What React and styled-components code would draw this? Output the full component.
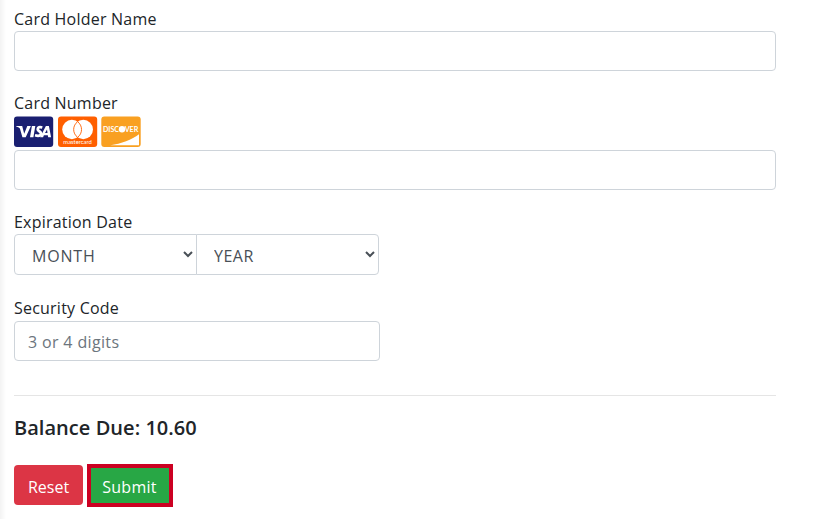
import styled, { createGlobalStyle, css } from 'styled-components';

function VisaIcon() {
  return (
    <svg width="40" height="31" viewBox="0 0 40 31">
      <rect x="0" y="0.5" width="39.2" height="30.5" rx="3" fill="#1a1f71" />
      <path d="M2.2 10h6l2 7.700 3.100-7.700h3.600L11.700 21.200H8.400L5.900 12.400Q4.600 11.300 2.200 10.600z" fill="#fff" />
      <path d="M17.900 10h3.400L19.400 21.200h-3.400z" fill="#fff" />
      <path d="M28.300 11.500Q24 10.300 23.700 13.200C23.700 15.400 27.400 15.200 27 17.900Q26.200 20.700 21 19.300" fill="none" stroke="#fff" strokeWidth="2.700" />
      <path fillRule="evenodd" d="M31.900 10h3L37.100 21.200h-2.900l-.4-2h-3.900L29.100 21.200h-3zM33 13.500l-2 3.600h2.500z" fill="#fff" />
    </svg>
  );
}

function MastercardIcon() {
  return (
    <svg width="40" height="31" viewBox="0 0 40 31">
      <rect x="0" y="0.5" width="39.2" height="30.5" rx="3" fill="#ff5f00" />
      <circle cx="13.900" cy="13.500" r="9.700" fill="#fff" />
      <circle cx="25.300" cy="13.500" r="9.700" fill="#fff" />
      <path d="M19.600 5.700a9.700 9.700 0 0 1 0 15.600a9.700 9.700 0 0 1 0-15.600z" fill="#fff" stroke="#ff5f00" strokeWidth="0.900" />
      <text x="19.600" y="28" textAnchor="middle" textLength="28.500" lengthAdjust="spacingAndGlyphs" fontFamily="Lato, sans-serif" fontSize="5.400" fill="#fff">mastercard</text>
    </svg>
  );
}

function DiscoverIcon() {
  return (
    <svg width="40" height="31" viewBox="0 0 40 31">
      <rect x="0.3" y="0.5" width="39.400" height="30.500" rx="3" fill="#f9a021" />
      <text x="2" y="15.900" textLength="16" lengthAdjust="spacingAndGlyphs" fontFamily="Lato, sans-serif" fontWeight="700" fontSize="8.200" fill="#fff">DISC</text>
      <circle cx="21" cy="13.200" r="3.200" fill="#fff" />
      <text x="23.700" y="15.900" textLength="13.600" lengthAdjust="spacingAndGlyphs" fontFamily="Lato, sans-serif" fontWeight="700" fontSize="8.200" fill="#fff">VER</text>
      <path d="M9.500 29.200C20 27.800 31 23.800 38 18.300v10.900z" fill="#fff" />
    </svg>
  );
}

function App() {
  return (
    <>
      <GlobalStyle />
      <Page>
        <Form onSubmit={e => e.preventDefault()}>
          <Group $gap={20}>
            <Label htmlFor="holder">Card Holder Name</Label>
            <Input id="holder" type="text" />
          </Group>
          <Group $gap={20}>
            <Label htmlFor="number">Card Number</Label>
            <Cards>
              <VisaIcon />
              <MastercardIcon />
              <DiscoverIcon />
            </Cards>
            <Input id="number" type="text" />
          </Group>
          <Group $gap={21}>
            <Label htmlFor="month">Expiration Date</Label>
            <SelectRow>
              <Select id="month" $first>
                <option>MONTH</option>
              </Select>
              <Select aria-label="year">
                <option>YEAR</option>
              </Select>
            </SelectRow>
          </Group>
          <Group $gap={34}>
            <Label htmlFor="code" $tall>Security Code</Label>
            <Input id="code" type="text" placeholder="3 or 4 digits" $short />
          </Group>
          <Divider />
          <Balance>Balance Due: 10.60</Balance>
          <Actions>
            <ResetButton type="reset">Reset</ResetButton>
            <SubmitButton type="submit">Submit</SubmitButton>
          </Actions>
        </Form>
      </Page>
    </>
  );
}

const GlobalStyle = createGlobalStyle`
  * {
    box-sizing: border-box;
  }
  body {
    margin: 0;
    background: #fff;
    color: #212529;
    font-family: "Open Sans", "Noto Sans", sans-serif;
    font-size: 16px;
    overflow: hidden;
  }
`;

const Page = styled.main`
  height: 519px;
  padding: 7px 42px 0 14px;
  background: linear-gradient(to right, #f3f3f3, #fff 6px);
`;

const Form = styled.form`
  display: flex;
  flex-direction: column;
`;

const Group = styled.div`
  display: flex;
  flex-direction: column;
  margin-bottom: ${props => props.$gap}px;
`;

const Label = styled.label`
  height: ${props => (props.$tall ? 25 : 24)}px;
  line-height: 24px;
  letter-spacing: 0.22px;
`;

const control = css`
  background: #fff;
  border: 1px solid #ced4da;
  font-family: inherit;
  font-size: 16px;
  letter-spacing: 0.35px;
  color: #495057;
  outline: none;
`;

const Input = styled.input`
  ${control}
  width: ${props => (props.$short ? '366px' : '100%')};
  height: 40px;
  padding: 2px 13px 0;
  border-radius: 4px;

  &::placeholder {
    color: #6c757d;
    opacity: 1;
  }
`;

const Cards = styled.div`
  display: flex;
  gap: 3.500px;
  height: 35px;
  padding-top: 1px;
`;

const SelectRow = styled.div`
  display: flex;
  width: 365px;
`;

const Select = styled.select`
  ${control}
  width: 183px;
  height: 41px;
  padding: 2px 2px 0 13px;
  letter-spacing: ${props => (props.$first ? 0.8 : 0.5)}px;
  border-radius: ${props => (props.$first ? '4px 0 0 4px' : '0 4px 4px 0')};

  & + & {
    margin-left: -1px;
  }
`;

const Divider = styled.hr`
  width: 100%;
  margin: 0;
  border: 0;
  border-top: 1px solid #e5e5e5;
`;

const Balance = styled.h5`
  margin: 19px 0 23px;
  font-size: 20px;
  font-weight: 600;
  letter-spacing: 0.04px;
  line-height: 26px;
`;

const Actions = styled.div`
  display: flex;
  align-items: flex-start;
  gap: 4px;
`;

const Button = styled.button`
  padding: 3px 0 0;
  border: 0;
  color: #fff;
  font-family: inherit;
  font-size: 16px;
`;

const ResetButton = styled(Button)`
  width: 69px;
  height: 40px;
  margin-top: 1px;
  padding-top: 4px;
  border-radius: 4px;
  background: #dc3545;
`;

const SubmitButton = styled(Button)`
  width: 86px;
  height: 43px;
  padding-right: 1px;
  border: 4px solid #cc0022;
  letter-spacing: 0.3px;
  background: #28a745;
`;

export default App;
